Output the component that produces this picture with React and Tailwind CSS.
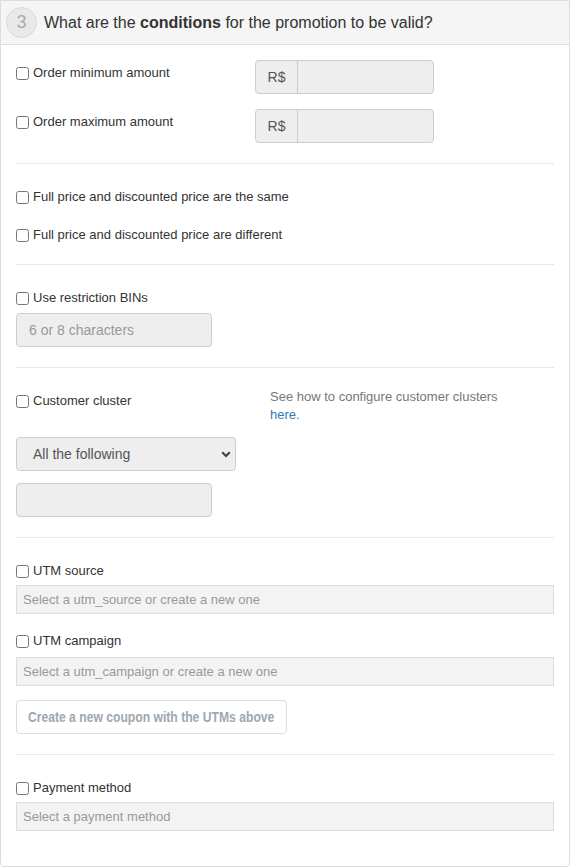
import React from "react";

const font = { fontFamily: '"Liberation Sans", Arial, sans-serif' };

function Check({ children, className = "" }) {
  return (
    <label className={"flex items-center gap-[4px] text-[13px] leading-[18px] text-[#333] " + className}>
      <input type="checkbox" className="m-0 h-[13px] w-[13px] shrink-0" />
      <span>{children}</span>
    </label>
  );
}

function Money({ className = "" }) {
  return (
    <div className={"flex h-[34px] w-[179px] rounded-[4px] border border-[#ccc] bg-[#eee] " + className}>
      <div className="flex w-[42px] items-center justify-center border-r border-[#ccc] text-[14px] text-[#555]">R$</div>
      <div className="flex-1" />
    </div>
  );
}

function Tag({ children, className = "" }) {
  return (
    <div className={"flex h-[29px] items-center border border-[#ddd] bg-[#f3f3f3] px-[6px] text-[13px] text-[#999] " + className}>
      {children}
    </div>
  );
}

export default function App() {
  return (
    <div className="bg-white" style={font}>
      <div className="w-[570px] overflow-hidden rounded-b-[4px] border border-[#ddd] bg-white">
        <div className="flex h-[44px] items-center gap-[7px] border-b border-[#ddd] bg-[#f5f5f5] pl-[5px]">
          <div className="flex h-[31px] w-[31px] items-center justify-center rounded-full border border-[#d9d9d9] bg-[#e9e9e9] text-[18px] text-[#aaa]">
            3
          </div>
          <div className="text-[16px] text-[#333]">
            What are the <b>conditions</b> for the promotion to be valid?
          </div>
        </div>

        <div className="px-[15px] pb-[35px]">
          <div className="flex flex-col gap-[15px] pt-[15px] pb-[20px]">
            <div className="flex items-start">
              <Check className="w-[239px] pt-[4px]">Order minimum amount</Check>
              <Money />
            </div>
            <div className="flex items-start">
              <Check className="w-[239px] pt-[4px]">Order maximum amount</Check>
              <Money />
            </div>
          </div>

          <div className="flex flex-col gap-[20px] border-t border-[#e8e8e8] pt-[24px] pb-[20px]">
            <Check>Full price and discounted price are the same</Check>
            <Check>Full price and discounted price are different</Check>
          </div>

          <div className="border-t border-[#e8e8e8] pt-[24px] pb-[20px]">
            <Check>Use restriction BINs</Check>
            <div className="mt-[6px] flex h-[34px] w-[196px] items-center rounded-[4px] border border-[#ccc] bg-[#eee] px-[12px] text-[14px] text-[#999]">
              6 or 8 characters
            </div>
          </div>

          <div className="border-t border-[#e8e8e8] pt-[20px] pb-[20px]">
            <div className="flex items-start">
              <Check className="w-[254px] pt-[4px]">Customer cluster</Check>
              <div className="w-[240px] text-[13px] leading-[18px] text-[#777]">
                See how to configure customer clusters <span className="text-[#337ab7]">here</span>.
              </div>
            </div>
            <div className="relative mt-[13px] flex h-[34px] w-[220px] items-center rounded-[4px] border border-[#ccc] bg-[#eee] pl-[16px] text-[14px] text-[#555]">
              All the following
              <svg className="absolute right-[4px] top-[13px]" width="10" height="7" viewBox="0 0 10 7">
                <path d="M1.2 1.2 L5 5 L8.8 1.2" fill="none" stroke="#444" strokeWidth="2.2" />
              </svg>
            </div>
            <div className="mt-[12px] h-[34px] w-[196px] rounded-[4px] border border-[#ccc] bg-[#eee]" />
          </div>

          <div className="border-t border-[#e8e8e8] pt-[24px] pb-[20px]">
            <Check>UTM source</Check>
            <Tag className="mt-[5px]">Select a utm_source or create a new one</Tag>
            <Check className="mt-[18px]">UTM campaign</Check>
            <Tag className="mt-[7px]">Select a utm_campaign or create a new one</Tag>
            <button className="mt-[14px] flex h-[34px] w-[271px] items-center justify-center overflow-hidden rounded-[4px] border border-[#ddd] bg-white text-[15px] font-bold text-[#9ea7b1]">
              <span className="inline-block scale-x-[0.81] whitespace-nowrap">Create a new coupon with the UTMs above</span>
            </button>
          </div>

          <div className="border-t border-[#e8e8e8] pt-[24px]">
            <Check>Payment method</Check>
            <Tag className="mt-[5px]">Select a payment method</Tag>
          </div>
        </div>
      </div>
    </div>
  );
}
